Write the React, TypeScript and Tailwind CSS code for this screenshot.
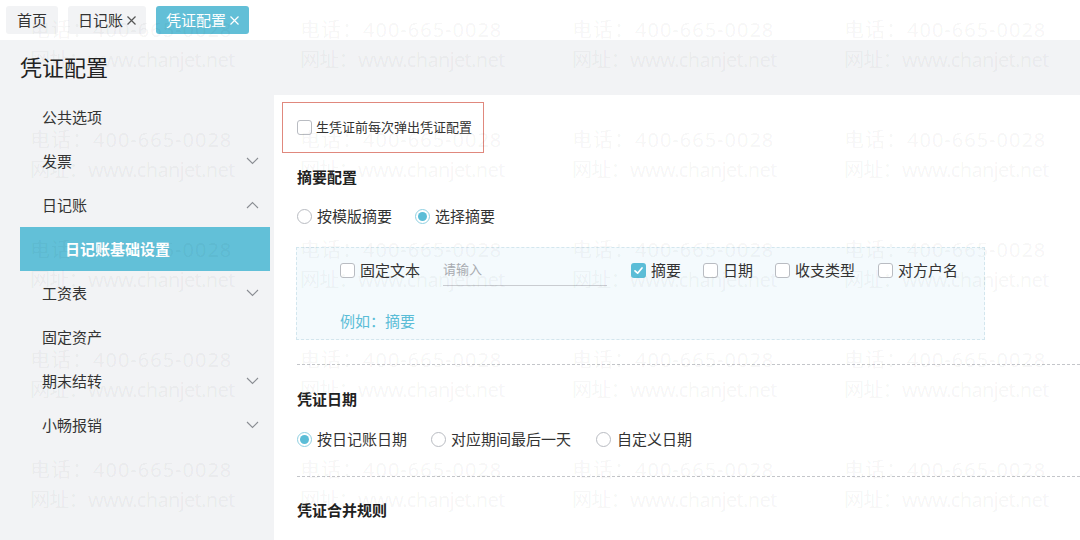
import React from "react";

const FONT = { fontFamily: '"Noto Sans", "Noto Sans CJK SC", sans-serif' };

function Chevron({ up = false }: { up?: boolean }) {
  return (
    <svg width="13" height="8" viewBox="0 0 13 8" className="text-[#8a8d93]">
      <polyline
        points={up ? "1,7 6.5,1.5 12,7" : "1,1 6.5,6.5 12,1"}
        fill="none"
        stroke="currentColor"
        strokeWidth="1.1"
      />
    </svg>
  );
}

function CloseX({ className = "" }: { className?: string }) {
  return (
    <svg width="11" height="11" viewBox="0 0 11 11" className={className}>
      <path d="M1.5 1.5 L9.5 9.5 M9.5 1.5 L1.5 9.5" stroke="currentColor" strokeWidth="1.2" fill="none" />
    </svg>
  );
}

function Checkbox({ checked = false }: { checked?: boolean }) {
  if (checked) {
    return (
      <span className="w-[15px] h-[15px] rounded-[3px] bg-[#5bbdd7] flex items-center justify-center shrink-0">
        <svg width="11" height="11" viewBox="0 0 11 11">
          <polyline points="2,5.8 4.6,8.2 9,3" fill="none" stroke="#fff" strokeWidth="1.7" strokeLinecap="round" strokeLinejoin="round" />
        </svg>
      </span>
    );
  }
  return <span className="w-[15px] h-[15px] rounded-[3px] border border-[#b9bcc2] bg-white shrink-0" />;
}

function Radio({ checked = false }: { checked?: boolean }) {
  if (checked) {
    return (
      <span className="w-[15px] h-[15px] rounded-full border border-[#8fd0e2] bg-white flex items-center justify-center shrink-0">
        <span className="w-[9px] h-[9px] rounded-full bg-[#5bbdd7]" />
      </span>
    );
  }
  return <span className="w-[15px] h-[15px] rounded-full border border-[#b9bcc2] bg-white shrink-0" />;
}

function SideItem({ label, arrow }: { label: string; arrow?: "up" | "down" }) {
  return (
    <div className="h-[44px] flex items-center justify-between pl-[42px] pr-[15px] text-[15px] text-[#333]">
      <span>{label}</span>
      {arrow && <Chevron up={arrow === "up"} />}
    </div>
  );
}

function Watermark() {
  const cols = [30, 300, 572, 844];
  const rows = [30, 140, 250, 360, 470];
  return (
    <div className="absolute inset-0 pointer-events-none select-none">
      {rows.map((y) =>
        cols.map((x) => (
          <React.Fragment key={`${x}-${y}`}>
            <div
              className="absolute text-[20px] leading-[24px] tracking-[1px] text-[rgba(0,0,0,0.05)] whitespace-nowrap"
              style={{ left: x, top: y - 12 }}
            >
              电话：400-665-0028
            </div>
            <div
              className="absolute text-[20px] leading-[24px] tracking-[-0.7px] text-[rgba(0,0,0,0.05)] whitespace-nowrap"
              style={{ left: x, top: y + 18 }}
            >
              网址：www.chanjet.net
            </div>
          </React.Fragment>
        ))
      )}
    </div>
  );
}

export default function App() {
  return (
    <div className="relative w-[1080px] h-[540px] overflow-hidden bg-white flex flex-col" style={FONT}>
      {/* tab strip */}
      <div className="h-[40px] flex items-center pl-[6px] gap-[10px] shrink-0">
        <div className="h-[28px] px-[11px] rounded-[3px] bg-[#f2f3f5] flex items-center text-[15px] text-[#333]">首页</div>
        <div className="h-[28px] pl-[10px] pr-[9px] rounded-[3px] bg-[#f2f3f5] flex items-center gap-[3px] text-[15px] text-[#333]">
          日记账
          <CloseX className="text-[#555]" />
        </div>
        <div className="h-[28px] pl-[10px] pr-[9px] rounded-[3px] bg-[#62bfd7] flex items-center gap-[3px] text-[15px] text-white">
          凭证配置
          <CloseX className="text-white" />
        </div>
      </div>

      {/* page title */}
      <div className="h-[55px] bg-[#f2f3f5] flex items-center pl-[20px] text-[22px] text-[#222] shrink-0">凭证配置</div>

      <div className="flex flex-1 min-h-0">
        {/* side menu */}
        <div className="w-[274px] bg-[#f2f3f5] shrink-0">
          <SideItem label="公共选项" />
          <SideItem label="发票" arrow="down" />
          <SideItem label="日记账" arrow="up" />
          <div className="h-[44px] ml-[20px] mr-[4px] bg-[#62c0d8] flex items-center pl-[45px] text-[15px] font-bold text-white">
            日记账基础设置
          </div>
          <SideItem label="工资表" arrow="down" />
          <SideItem label="固定资产" />
          <SideItem label="期末结转" arrow="down" />
          <SideItem label="小畅报销" arrow="down" />
        </div>

        {/* settings panel */}
        <div className="flex-1 bg-white flex flex-col text-[#333]">
          <div className="mt-[7px] ml-[8px] w-[202px] h-[51px] border border-[#e0887d] flex items-center pl-[14px] gap-[4px]">
            <Checkbox />
            <span className="text-[13px]">生凭证前每次弹出凭证配置</span>
          </div>

          <div className="mt-[14px] ml-[23px] h-[20px] flex items-center text-[15px] font-bold text-[#222]">摘要配置</div>

          <div className="mt-[19px] ml-[23px] h-[20px] flex items-center text-[15px]">
            <Radio />
            <span className="ml-[5px]">按模版摘要</span>
            <span className="ml-[23px]" />
            <Radio checked />
            <span className="ml-[5px]">选择摘要</span>
          </div>

          <div className="mt-[21px] ml-[22px] w-[689px] h-[93px] border border-dashed border-[#d3e6ee] bg-[#f4fafd] flex flex-col">
            <div className="mt-[12px] pl-[43px] h-[20px] flex items-center text-[15px]">
              <Checkbox />
              <span className="ml-[5px]">固定文本</span>
              <div className="ml-[23px] w-[164px] h-[26px] mt-[6px] border-b border-[#c9ccd1] flex items-start text-[13px] text-[#a8abb0]">
                请输入
              </div>
              <span className="ml-[24px]" />
              <Checkbox checked />
              <span className="ml-[5px]">摘要</span>
              <span className="ml-[22px]" />
              <Checkbox />
              <span className="ml-[5px]">日期</span>
              <span className="ml-[22px]" />
              <Checkbox />
              <span className="ml-[5px]">收支类型</span>
              <span className="ml-[23px]" />
              <Checkbox />
              <span className="ml-[5px]">对方户名</span>
            </div>
            <div className="mt-[31px] pl-[43px] h-[20px] flex items-center text-[15px] text-[#5bbdd7]">例如：摘要</div>
          </div>

          <div className="mt-[24px] ml-[23px] border-t border-dashed border-[#c4c6ca]" />

          <div className="mt-[24px] ml-[23px] h-[20px] flex items-center text-[15px] font-bold text-[#222]">凭证日期</div>

          <div className="mt-[20px] ml-[23px] h-[20px] flex items-center text-[15px]">
            <Radio checked />
            <span className="ml-[5px]">按日记账日期</span>
            <span className="ml-[24px]" />
            <Radio />
            <span className="ml-[5px]">对应期间最后一天</span>
            <span className="ml-[25px]" />
            <Radio />
            <span className="ml-[6px]">自定义日期</span>
          </div>

          <div className="mt-[27px] ml-[23px] border-t border-dashed border-[#c4c6ca]" />

          <div className="mt-[23px] ml-[23px] h-[20px] flex items-center text-[15px] font-bold text-[#222]">凭证合并规则</div>
        </div>
      </div>

      <Watermark />
    </div>
  );
}
